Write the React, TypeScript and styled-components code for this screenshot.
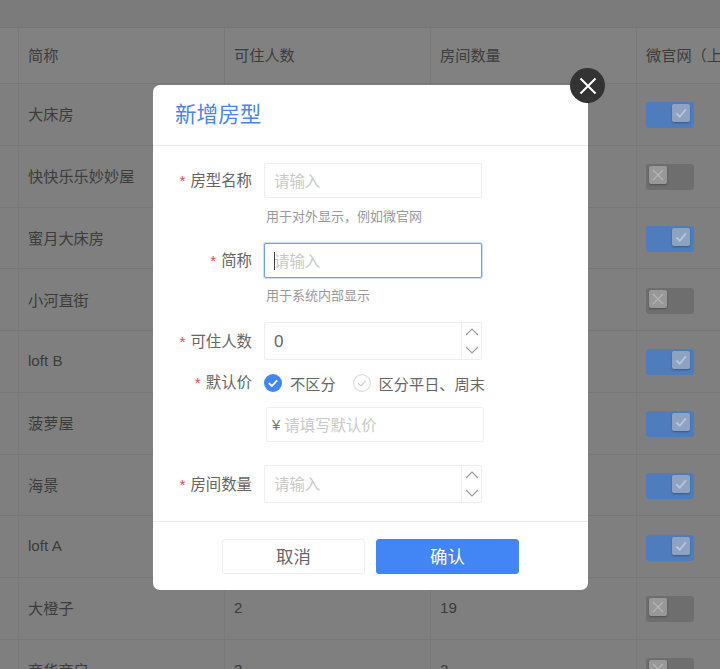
import React from "react";
import styled, { createGlobalStyle } from "styled-components";

const Global = createGlobalStyle`
  html, body { margin: 0; padding: 0; height: 100%; overflow: hidden; background: #7f7f7f; }
  body { font-family: "Liberation Sans", "Noto Sans CJK SC", sans-serif; }
  * { box-sizing: border-box; }
`;

const Page = styled.div`
  position: relative;
  width: 720px;
  height: 669px;
  overflow: hidden;
  background: #7f7f7f;
`;
const TopBand = styled.div`
  height: 28px;
  background: #7b7b7b;
  border-bottom: 1px solid #767676;
`;
const Row = styled.div<{ $head?: boolean }>`
  display: grid;
  grid-template-columns: 18px 206px 206px 206px 1fr;
  height: ${(p) => (p.$head ? "56px" : "61.75px")};
  background: ${(p) => (p.$head ? "#818181" : "#7f7f7f")};
  border-bottom: 1px solid #777777;
  color: #3c3c3c;
  font-size: 15.2px;
`;
const Cell = styled.div<{ $head?: boolean }>`
  display: flex;
  align-items: center;
  padding: 0 0 ${(p) => (p.$head ? "3px" : "2px")} 9px;
  border-left: 1px solid #797979;
  white-space: nowrap;
  overflow: hidden;
  &:first-child { border-left: none; padding: 0; }
`;
const Toggle = styled.div<{ $on: boolean }>`
  display: flex;
  justify-content: ${(p) => (p.$on ? "flex-end" : "flex-start")};
  align-items: flex-start;
  width: 48px;
  height: 26px;
  margin-top: 4px;
  padding: 2px ${(p) => (p.$on ? "4px" : "3px")};
  border-radius: 3px;
  background: ${(p) => (p.$on ? "#4f7cbc" : "#6e6e6e")};
`;
const Knob = styled.div<{ $on: boolean }>`
  display: flex;
  align-items: center;
  justify-content: center;
  width: 18px;
  height: 18px;
  border-radius: 2px;
  background: ${(p) => (p.$on ? "#8ea3c2" : "#989898")};
  box-shadow: 0 1px 2px rgba(0, 0, 0, 0.3);
`;

const Overlay = styled.div`
  position: absolute;
  inset: 0;
  padding: 85px 0 0 153px;
`;
const Modal = styled.div`
  position: relative;
  width: 435px;
  height: 505px;
  background: #fff;
  border-radius: 7px;
  display: flex;
  flex-direction: column;
`;
const CloseButton = styled.button`
  position: absolute;
  top: -17px;
  right: -17px;
  width: 35px;
  height: 35px;
  padding: 0;
  border: none;
  border-radius: 50%;
  background: #333333;
  display: flex;
  align-items: center;
  justify-content: center;
`;
const Header = styled.div`
  height: 61px;
  flex: none;
  padding: 0 22px 6px;
  display: flex;
  align-items: center;
  border-bottom: 1px solid #ececec;
`;
const Title = styled.h2`
  margin: 0;
  font-size: 21.6px;
  font-weight: 400;
  color: #4a86ee;
`;
const Body = styled.div`
  flex: 1;
  padding-top: 17px;
  display: flex;
  flex-direction: column;
`;
const Field = styled.div<{ $gap?: number }>`
  display: flex;
  align-items: center;
  gap: 12px;
  margin-top: ${(p) => p.$gap ?? 0}px;
`;
const Label = styled.label`
  width: 99px;
  flex: none;
  padding-bottom: 3px;
  text-align: right;
  font-size: 15.4px;
  color: #666666;
  white-space: nowrap;
`;
const Star = styled.span`
  color: #e8484c;
  margin-right: 5px;
`;
const InputBox = styled.div<{ $h?: number; $focus?: boolean; $shift?: boolean }>`
  position: relative;
  display: flex;
  align-items: center;
  width: 218px;
  height: ${(p) => p.$h ?? 35}px;
  margin-left: ${(p) => (p.$shift ? "2px" : "0")};
  border: 1px solid ${(p) => (p.$focus ? "#6f9ff2" : "#efefef")};
  border-radius: 2px;
  box-shadow: ${(p) => (p.$focus ? "0 0 0 1px rgba(111,159,242,.35)" : "none")};
  background: #fff;
`;
const TextInput = styled.input`
  flex: 1;
  min-width: 0;
  height: 100%;
  border: none;
  outline: none;
  padding: 2px 9px 0;
  background: transparent;
  font: inherit;
  font-size: 17px;
  color: #666666;
  &::placeholder { color: #c9c9c9; opacity: 1; font-size: 15.4px; }
`;
const Caret = styled.span`
  position: absolute;
  left: 9px;
  top: 8px;
  width: 1px;
  height: 18px;
  background: #444;
`;
const Spinner = styled.div`
  flex: none;
  width: 20px;
  height: 100%;
  border-left: 1px solid #efefef;
  display: flex;
  flex-direction: column;
  align-items: center;
  justify-content: space-around;
`;
const Hint = styled.div<{ $gap: number }>`
  margin: ${(p) => p.$gap}px 0 0 113px;
  height: 17px;
  line-height: 17px;
  font-size: 13px;
  color: #999999;
`;
const RadioRow = styled.div`
  display: flex;
  align-items: center;
  gap: 17px;
`;
const Radio = styled.div`
  display: flex;
  align-items: center;
  gap: 8px;
  font-size: 15.2px;
  color: #666666;
  white-space: nowrap;
`;
const Yen = styled.span`
  margin-left: 5px;
  margin-right: -5px;
  font-size: 15px;
  color: #777777;
`;
const Offset = styled.div`
  margin-left: 111px;
  margin-top: 12px;
`;
const Footer = styled.div`
  flex: none;
  height: 69px;
  padding-top: 17px;
  border-top: 1px solid #ececec;
  display: flex;
  justify-content: center;
  gap: 11px;
`;
const Button = styled.button<{ $primary?: boolean }>`
  width: 143px;
  height: 35px;
  padding: 0 0 2px;
  border-radius: 3px;
  border: 1px solid ${(p) => (p.$primary ? "#4285f4" : "#efefef")};
  background: ${(p) => (p.$primary ? "#4285f4" : "#fff")};
  color: ${(p) => (p.$primary ? "#fff" : "#666666")};
  font: inherit;
  font-size: 17.4px;
`;

const Check = ({ color, size = 12 }: { color: string; size?: number }) => (
  <svg width={size} height={size} viewBox="0 0 12 12" fill="none">
    <path d="M2 6.4 L5 9.2 L10.2 2.8" stroke={color} strokeWidth="1.6" />
  </svg>
);
const Cross = () => (
  <svg width="14" height="14" viewBox="0 0 14 14" fill="none">
    <path d="M2 2 L12 12 M12 2 L2 12" stroke="#b4b4b4" strokeWidth="1.3" />
  </svg>
);
const Chevron = ({ up }: { up?: boolean }) => (
  <svg width="14" height="8" viewBox="0 0 14 8" fill="none">
    <path d={up ? "M1 7 L7 1 L13 7" : "M1 1 L7 7 L13 1"} stroke="#9a9a9a" strokeWidth="1.1" />
  </svg>
);
const Steppers = () => (
  <Spinner>
    <Chevron up />
    <Chevron />
  </Spinner>
);
const RadioOn = () => (
  <svg width="18" height="18" viewBox="0 0 18 18">
    <circle cx="9" cy="9" r="9" fill="#4285f4" />
    <path d="M4.8 9.2 L7.9 12 L13.2 6.4" fill="none" stroke="#fff" strokeWidth="1.8" />
  </svg>
);
const RadioOff = () => (
  <svg width="18" height="18" viewBox="0 0 18 18">
    <circle cx="9" cy="9" r="8.4" fill="#fff" stroke="#dddddd" strokeWidth="1.1" />
    <path d="M5 9.2 L8 12 L13 6.6" fill="none" stroke="#cfcfcf" strokeWidth="1.2" />
  </svg>
);

const rows: { name: string; count?: string; rooms?: string; on: boolean }[] = [
  { name: "大床房", on: true },
  { name: "快快乐乐妙妙屋", on: false },
  { name: "蜜月大床房", on: true },
  { name: "小河直街", on: false },
  { name: "loft B", on: true },
  { name: "菠萝屋", on: true },
  { name: "海景", on: true },
  { name: "loft A", on: true },
  { name: "大橙子", count: "2", rooms: "19", on: false },
  { name: "商华商启", count: "2", rooms: "2", on: false },
];

export default function App() {
  return (
    <Page>
      <Global />
      <TopBand />
      <Row $head>
        <Cell $head />
        <Cell $head>简称</Cell>
        <Cell $head>可住人数</Cell>
        <Cell $head>房间数量</Cell>
        <Cell $head>微官网（上架）</Cell>
      </Row>
      {rows.map((r) => (
        <Row key={r.name}>
          <Cell />
          <Cell>{r.name}</Cell>
          <Cell>{r.count}</Cell>
          <Cell>{r.rooms}</Cell>
          <Cell>
            <Toggle $on={r.on}>
              <Knob $on={r.on}>{r.on ? <Check color="#b9c6da" size={14} /> : <Cross />}</Knob>
            </Toggle>
          </Cell>
        </Row>
      ))}
      <Overlay>
        <Modal>
          <CloseButton aria-label="关闭">
            <svg width="18" height="18" viewBox="0 0 18 18" fill="none">
              <path d="M1.5 1.5 L16.5 16.5 M16.5 1.5 L1.5 16.5" stroke="#fff" strokeWidth="2" />
            </svg>
          </CloseButton>
          <Header>
            <Title>新增房型</Title>
          </Header>
          <Body>
            <Field>
              <Label><Star>*</Star>房型名称</Label>
              <InputBox>
                <TextInput placeholder="请输入" />
              </InputBox>
            </Field>
            <Hint $gap={10}>用于对外显示，例如微官网</Hint>
            <Field $gap={18}>
              <Label><Star>*</Star>简称</Label>
              <InputBox $focus>
                <TextInput placeholder="请输入" />
                <Caret />
              </InputBox>
            </Field>
            <Hint $gap={9}>用于系统内部显示</Hint>
            <Field $gap={18}>
              <Label><Star>*</Star>可住人数</Label>
              <InputBox $h={38}>
                <TextInput defaultValue="0" />
                <Steppers />
              </InputBox>
            </Field>
            <Field $gap={10}>
              <Label><Star>*</Star>默认价</Label>
              <RadioRow>
                <Radio><RadioOn />不区分</Radio>
                <Radio><RadioOff />区分平日、周末</Radio>
              </RadioRow>
            </Field>
            <Offset>
              <InputBox $shift>
                <Yen>¥</Yen>
                <TextInput placeholder="请填写默认价" />
              </InputBox>
            </Offset>
            <Field $gap={23}>
              <Label><Star>*</Star>房间数量</Label>
              <InputBox $h={38}>
                <TextInput placeholder="请输入" />
                <Steppers />
              </InputBox>
            </Field>
          </Body>
          <Footer>
            <Button>取消</Button>
            <Button $primary>确认</Button>
          </Footer>
        </Modal>
      </Overlay>
    </Page>
  );
}
